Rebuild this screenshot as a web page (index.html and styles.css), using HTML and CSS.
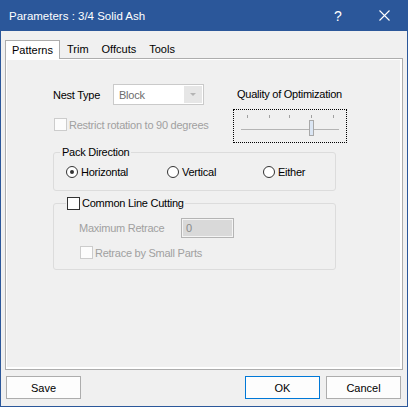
FILE: index.html
```html
<!DOCTYPE html>
<html>
<head>
<meta charset="utf-8">
<link rel="stylesheet" href="styles.css">
</head>
<body>
<div class="window">
  <header class="titlebar">
    <span class="title">Parameters : 3/4 Solid Ash</span>
    <span class="cap-btn help">?</span>
    <span class="cap-btn close"><svg width="11" height="11" viewBox="0 0 11 11"><path d="M0.5 0.5L10.5 10.5M10.5 0.5L0.5 10.5" stroke="#fff" stroke-width="1.1" fill="none"/></svg></span>
  </header>
  <div class="body">
    <div class="tabs">
      <div class="tab active">Patterns</div>
      <div class="tab">Trim</div>
      <div class="tab">Offcuts</div>
      <div class="tab">Tools</div>
    </div>
    <div class="panel">
      <div class="top">
        <div class="left-col">
          <div class="nest-row">
            <span class="nest-label">Nest Type</span>
            <div class="select">
              <span class="select-text">Block</span>
              <span class="select-arrow"><svg width="6" height="4" viewBox="0 0 6 4"><path d="M0 0H6L3 3Z" fill="#b4b4b4"/></svg></span>
            </div>
          </div>
          <div class="check-row disabled restrict">
            <span class="check"></span>
            <span>Restrict rotation to 90 degrees</span>
          </div>
        </div>
        <div class="right-col">
          <div class="quality-label">Quality of Optimization</div>
          <div class="slider">
            <svg width="112" height="32" viewBox="0 0 112 32">
              <g stroke="#a0a0a0" stroke-width="1">
                <path d="M13.5 5V8M35.5 5V8M55.5 5V8M77.5 5V8M99.5 5V8"/>
              </g>
              <path d="M7 19.5H105" stroke="#b4b4b4" stroke-width="1"/>
              <rect x="75.5" y="10.5" width="4" height="15" fill="#dbe6f4" stroke="#a8a8a8"/>
            </svg>
          </div>
        </div>
      </div>
      <fieldset class="group pack">
        <legend>Pack Direction</legend>
        <div class="radios">
          <label class="radio-item w1"><span class="radio checked"></span>Horizontal</label>
          <label class="radio-item w2"><span class="radio"></span>Vertical</label>
          <label class="radio-item"><span class="radio"></span>Either</label>
        </div>
      </fieldset>
      <fieldset class="group common">
        <legend class="check-legend"><span class="check"></span>Common Line Cutting</legend>
        <div class="retrace-row">
          <span class="retrace-label">Maximum Retrace</span>
          <span class="num-input">0</span>
        </div>
        <div class="check-row disabled small-parts">
          <span class="check"></span>
          <span>Retrace by Small Parts</span>
        </div>
      </fieldset>
    </div>
    <div class="buttons">
      <button class="btn">Save</button>
      <span class="spacer"></span>
      <button class="btn default">OK</button>
      <button class="btn">Cancel</button>
    </div>
  </div>
</div>
</body>
</html>
```

FILE: styles.css
```css
* { box-sizing: border-box; }
html, body { margin: 0; padding: 0; background: #f0f0f0; }
body { font-family: "Liberation Sans", Arial, sans-serif; font-size: 11px; color: #000; }

.window {
  width: 408px;
  height: 407px;
  border: 1px solid #2b579a;
  border-top: 0;
  background: #f0f0f0;
  display: flex;
  flex-direction: column;
}

.titlebar {
  height: 31px;
  background: #2b579a;
  color: #fff;
  display: flex;
  align-items: center;
  padding-left: 8px;
  flex-shrink: 0;
}
.title { font-size: 11.5px; flex: 1; padding-top: 1px; }
.cap-btn {
  width: 46px;
  height: 31px;
  display: flex;
  align-items: center;
  justify-content: center;
}
.help { font-size: 14px; padding-top: 1px; }
.close svg { display: block; }

.body {
  flex: 1;
  display: flex;
  flex-direction: column;
  padding: 9px 4px 7px 4px;
}

.tabs {
  display: flex;
  align-items: flex-end;
  height: 18px;
}
.tab {
  height: 16px;
  line-height: 15px;
  padding: 0 6px 0 7px;
}
.tab.active {
  position: relative;
  z-index: 1;
  height: 19px;
  margin-bottom: -1px;
  padding: 2px 6px 0;
  border: 1px solid #adadad;
  border-bottom: 0;
  background: #fff;
}

.panel {
  height: 312px;
  border: 1px solid #adadad;
  background: #f0f0f0;
  box-shadow: inset -2px -2px 0 #fff, inset 1px 1px 0 #fff;
  padding: 25px 0 0 47px;
  letter-spacing: -0.25px;
}

.top { display: flex; }
.left-col { width: 180px; }
.nest-row { display: flex; align-items: center; height: 21px; }
.nest-label { width: 60px; }
.select {
  width: 91px;
  height: 21px;
  border: 1px solid #cacaca;
  background: #fff;
  display: flex;
  align-items: center;
  padding: 1px;
}
.select-text { flex: 1; padding-left: 4px; color: #6d6d6d; }
.select-arrow {
  width: 18px;
  height: 17px;
  background: #e6e6e6;
  display: flex;
  align-items: center;
  justify-content: center;
}
.select-arrow svg { display: block; }

.check-row { display: flex; align-items: center; height: 13px; }
.check {
  width: 13px;
  height: 13px;
  border: 1px solid #333;
  background: #fff;
  flex-shrink: 0;
  margin-right: 2px;
}
.disabled { color: #a0a0a0; }
.disabled .check { border-color: #cccccc; background: #fcfcfc; }
.restrict { margin-top: 13px; margin-left: 1px; }

.right-col { display: flex; flex-direction: column; }
.quality-label { margin: 4px 0 0 4px; line-height: 13px; }
.slider {
  margin-top: 8px;
  width: 114px;
  height: 34px;
  border: 1px dotted #000;
}
.slider svg { display: block; }

.group {
  margin: 0;
  border: 1px solid #dcdcdc;
  border-radius: 3px;
  width: 283px;
  min-width: 0;
}
.group legend { line-height: 13px; padding: 0 2px; }
.pack { margin-top: 3px; padding: 0 0 12px 6px; }
.radios { display: flex; margin: 7px 0 0 6px; height: 12px; align-items: center; }
.radio-item { display: flex; align-items: center; line-height: 12px; }
.w1 { width: 101px; }
.w2 { width: 96px; }
.radio {
  width: 12px;
  height: 12px;
  border: 1px solid #333;
  border-radius: 50%;
  background: #fff;
  margin-right: 3px;
  display: flex;
  align-items: center;
  justify-content: center;
}
.radio.checked::after {
  content: "";
  width: 4px;
  height: 4px;
  border-radius: 50%;
  background: #333;
}

.common { margin-top: 6px; padding: 0 0 10px 12px; }
.check-legend { display: flex; align-items: center; padding: 0 1px !important; }
.retrace-row { display: flex; align-items: center; margin: 8px 0 0 13px; height: 20px; }
.retrace-label { width: 102px; color: #a0a0a0; }
.num-input {
  width: 53px;
  height: 20px;
  border: 1px solid #b4b4b4;
  background: #d9d9d9;
  box-shadow: inset 0 0 0 1px #f4f4f4;
  color: #8a8a8a;
  padding-left: 4px;
  line-height: 18px;
}
.small-parts { margin: 8px 0 0 14px; }

.buttons {
  display: flex;
  margin-top: 6px;
  padding: 0 2px 0 1px;
  gap: 6px;
}
.spacer { flex: 1; }
.btn {
  width: 75px;
  height: 23px;
  border: 1px solid #adadad;
  background: #fdfdfd;
  font-family: "Liberation Sans", Arial, sans-serif;
  font-size: 11px;
  color: #000;
  padding: 0;
  margin: 0;
}
.btn.default { border-color: #0078d7; }
```
